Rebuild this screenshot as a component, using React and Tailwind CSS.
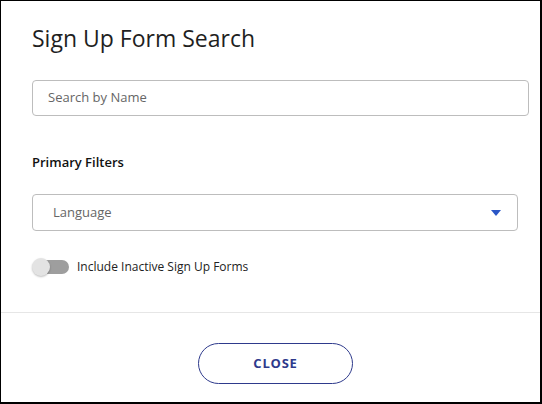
export default function App() {
  return (
    <div className="w-[542px] h-[404px] bg-white border-l border-t border-r-2 border-b-2 border-black flex flex-col font-['Open_Sans',sans-serif] text-[#222]">
      <div className="px-[31px] pt-[22px] flex flex-col">
        <h1 className="text-[23px] font-medium leading-[30px] text-[#1f1f1f]">Sign Up Form Search</h1>
        <div className="mt-[27px] h-[36px] w-[497px] border border-[#bdbdbd] rounded-[4px] flex items-center px-[15px]">
          <span className="text-[13px] text-[#666]">Search by Name</span>
        </div>
        <h2 className="mt-[36px] text-[13px] font-semibold text-[#111] leading-[20px]">Primary Filters</h2>
        <div className="mt-[22px] h-[37px] w-[486px] border border-[#bdbdbd] rounded-[4px] flex items-center justify-between pl-[20px] pr-[16px]">
          <span className="text-[13px] text-[#666]">Language</span>
          <svg width="10" height="6" viewBox="0 0 10 6">
            <path d="M0 0h10L5 6z" fill="#2a56c6" />
          </svg>
        </div>
        <div className="mt-[27px] flex items-center gap-[8px]">
          <div className="relative w-[37px] h-[18px] flex items-center">
            <div className="ml-[4px] w-[33px] h-[14px] rounded-full bg-[#9e9e9e]" />
            <div className="absolute left-0 top-0 w-[18px] h-[18px] rounded-full bg-[#e3e3e3] shadow-[0_1px_2px_rgba(0,0,0,0.25)]" />
          </div>
          <span className="text-[12px] text-[#222]">Include Inactive Sign Up Forms</span>
        </div>
      </div>
      <div className="mt-[36px] border-t border-[#e6e6e6]" />
      <div className="flex justify-center pt-[30px] pl-[10px]">
        <button className="w-[155px] h-[41px] rounded-full border border-[#2e3a8c] text-[#2e3a8c] text-[13px] font-bold tracking-[0.06em]">
          CLOSE
        </button>
      </div>
    </div>
  )
}
